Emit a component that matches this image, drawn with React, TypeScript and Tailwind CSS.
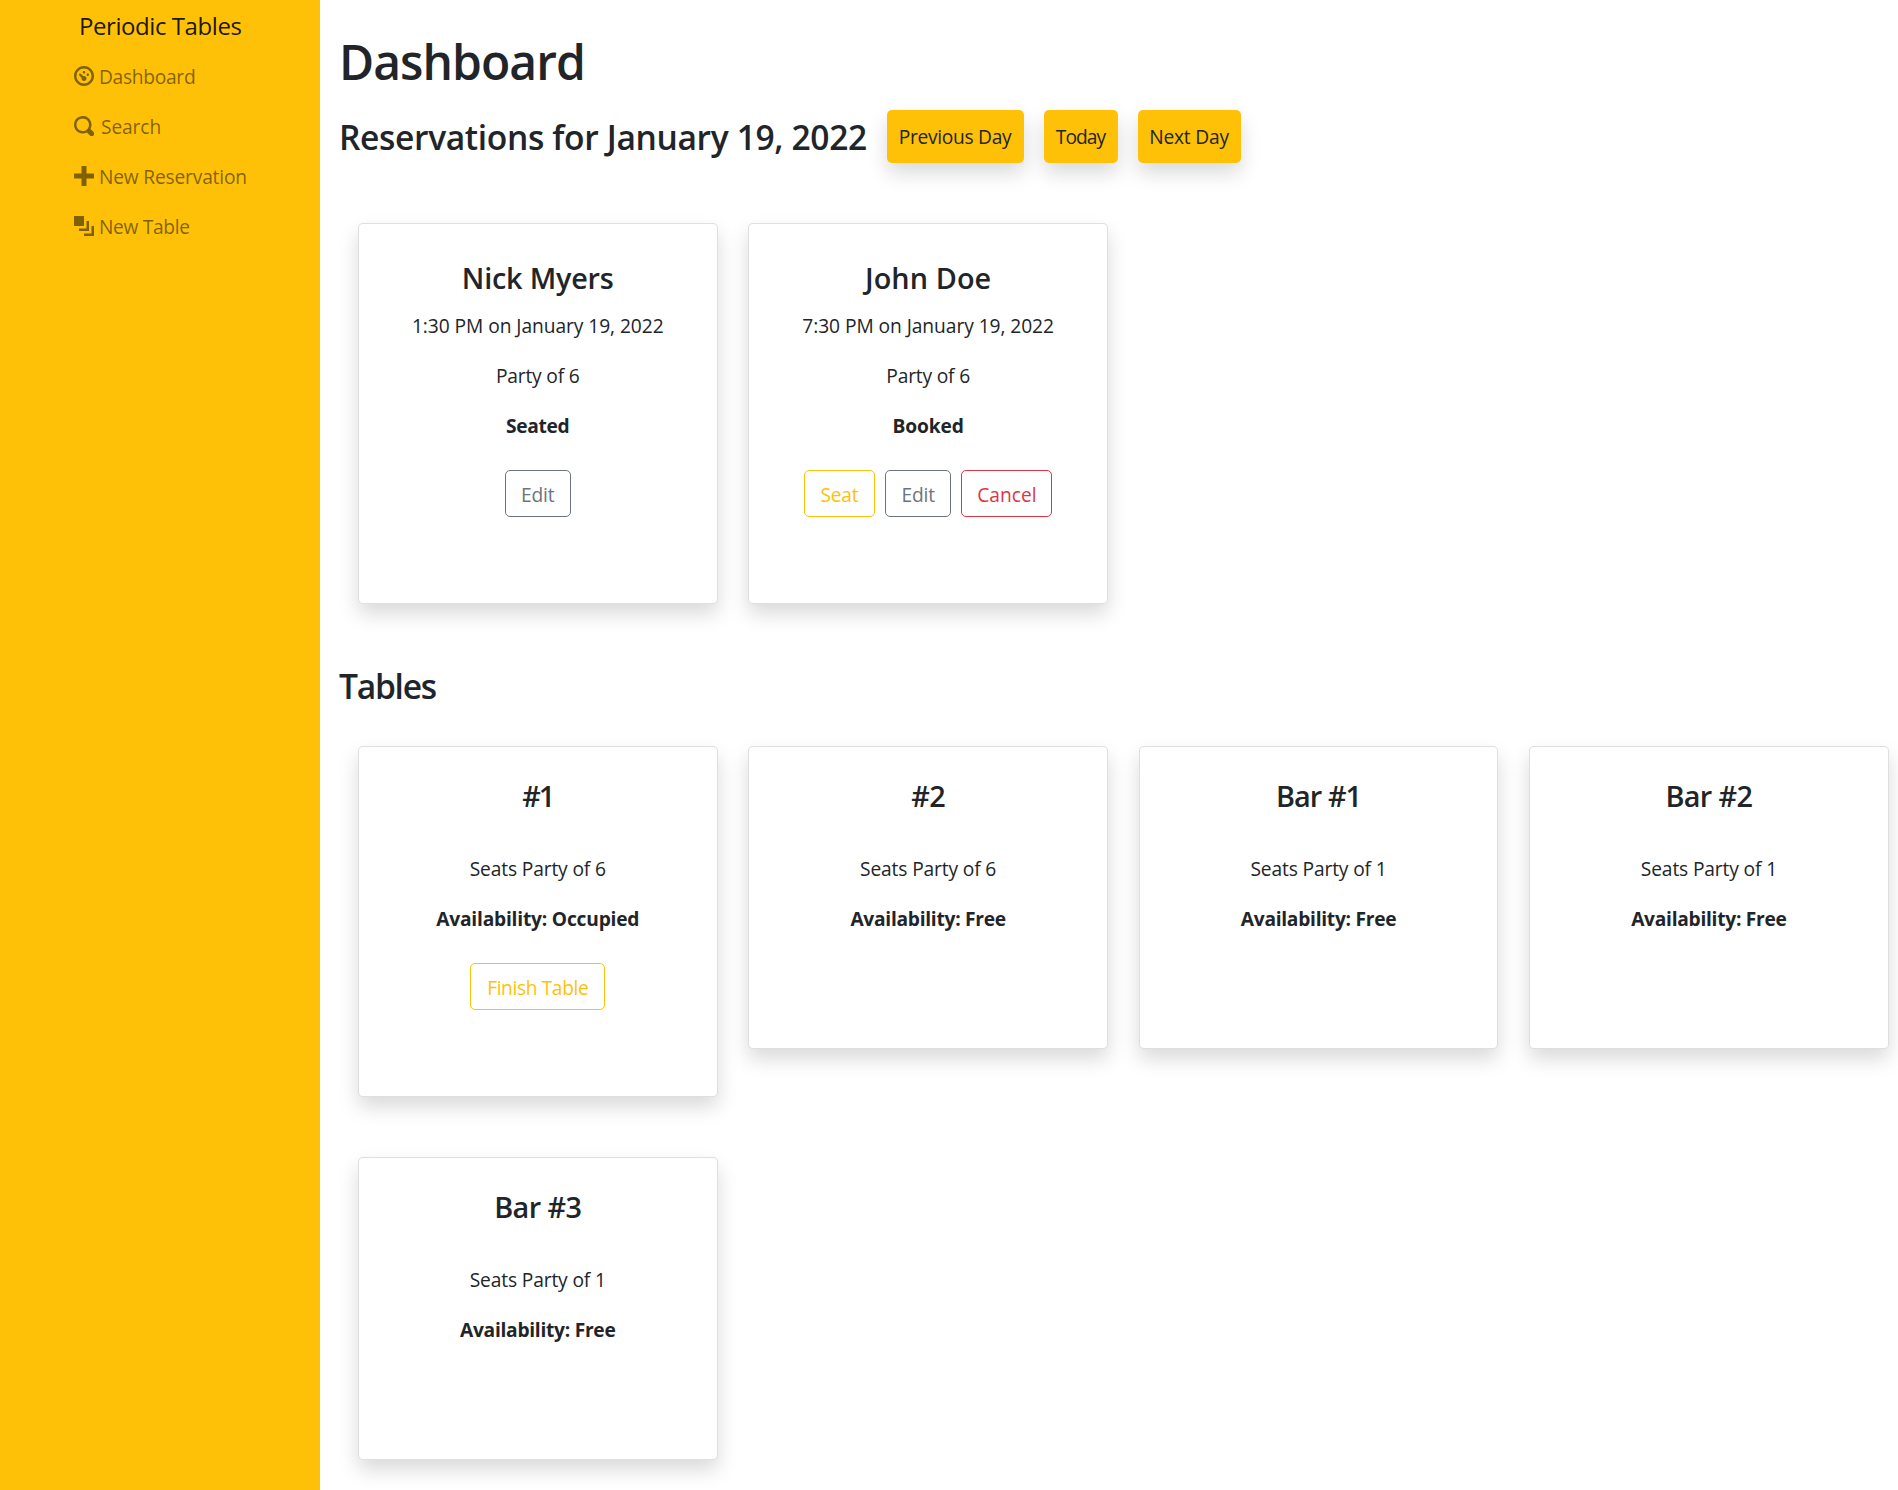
import type { ReactNode } from 'react';

const icons = {
  dashboard:
    'M4 0c-2.2 0-4 1.8-4 4s1.8 4 4 4 4-1.8 4-4-1.8-4-4-4zm0 1c1.66 0 3 1.34 3 3s-1.34 3-3 3-3-1.34-3-3 1.34-3 3-3zm0 1c-.28 0-.5.22-.5.5s.22.5.5.5.5-.22.5-.5-.22-.5-.5-.5zm-1.66 1a.5.5 0 0 0-.19.84l.91.91c-.02.08-.06.16-.06.25 0 .55.45 1 1 1s1-.45 1-1-.45-1-1-1c-.09 0-.17.04-.25.06l-.91-.91a.5.5 0 0 0-.44-.16.5.5 0 0 0-.06 0zm3.16 0c-.28 0-.5.22-.5.5s.22.5.5.5.5-.22.5-.5-.22-.5-.5-.5z',
  search:
    'M3.5 0c-1.93 0-3.5 1.57-3.5 3.5s1.57 3.5 3.5 3.5c.59 0 1.17-.14 1.66-.41a1 1 0 0 0 .13.13l1 1a1.02 1.02 0 1 0 1.44-1.44l-1-1a1 1 0 0 0-.16-.13c.27-.49.44-1.06.44-1.66 0-1.93-1.55-3.5-3.5-3.5zm0 1c1.39 0 2.5 1.11 2.5 2.5 0 .66-.24 1.27-.66 1.72-.01.01-.02.02-.03.03a1 1 0 0 0-.13.13c-.44.4-1.04.63-1.69.63-1.39 0-2.5-1.11-2.5-2.5s1.11-2.5 2.5-2.5z',
  plus: 'M3 0v3h-3v2h3v3h2v-3h3v-2h-3v-3h-2z',
  layers: 'M0 0v4h4v-4h-4zm5 2v3h-3v1h4v-4h-1zm2 2v3h-3v1h4v-4h-1z',
};

const navItems = [
  { label: 'Dashboard', icon: icons.dashboard, text: 'ml-[5.5px] tracking-[-0.3px]' },
  { label: 'Search', icon: icons.search, text: 'ml-[7.5px] tracking-[-0.12px]' },
  { label: 'New Reservation', icon: icons.plus, text: 'ml-[5.5px] tracking-[-0.19px]' },
  { label: 'New Table', icon: icons.layers, text: 'ml-[5.5px] tracking-[-0.34px]' },
];

const dayButtons = [
  { label: 'Previous Day', box: 'w-[137px] tracking-[-0.3px]' },
  { label: 'Today', box: 'w-[74px] tracking-[-0.95px]' },
  { label: 'Next Day', box: 'w-[103px] tracking-[-0.2px]' },
];

const seat = { label: 'Seat', style: 'w-[71px] border-[#ffc107] text-[#ffc107] tracking-[-0.25px]' };
const edit = { label: 'Edit', style: 'w-[66.5px] border-[#6c757d] text-[#6c757d] tracking-[-0.17px]' };
const cancel = { label: 'Cancel', style: 'w-[91px] border-[#dc3545] text-[#dc3545]' };
const finish = { label: 'Finish Table', style: 'w-[135px] border-[#ffc107] text-[#ffc107] tracking-[-0.39px]' };

const reservations = [
  { name: 'Nick Myers', title: 'tracking-[-0.2px]', time: '1:30 PM', status: 'Seated', statusStyle: 'tracking-[-0.34px]', actions: [edit] },
  { name: 'John Doe', title: 'tracking-[0.1px]', time: '7:30 PM', status: 'Booked', statusStyle: 'tracking-[-0.1px]', actions: [seat, edit, cancel] },
];

const tables = [
  { name: '#1', title: 'tracking-[-2px]', seats: 6, occupied: true },
  { name: '#2', title: 'tracking-[-0.6px]', seats: 6, occupied: false },
  { name: 'Bar #1', title: 'tracking-[-0.9px]', seats: 1, occupied: false },
  { name: 'Bar #2', title: 'tracking-[-0.6px]', seats: 1, occupied: false },
  { name: 'Bar #3', title: 'tracking-[-0.6px]', seats: 1, occupied: false },
];

function Card({ className, children }: { className: string; children: ReactNode }) {
  return (
    <div
      className={`flex flex-col items-center rounded-[5px] border border-black/[0.125] bg-white text-center shadow-[0_10px_20px_rgba(0,0,0,0.15)] ${className}`}
    >
      {children}
    </div>
  );
}

function Actions({ items }: { items: { label: string; style: string }[] }) {
  return (
    <div className="mt-[29px] flex gap-2.5">
      {items.map((a) => (
        <button key={a.label} className={`h-[47px] rounded-[5px] border pt-[9px] pb-[6px] leading-[30px] ${a.style}`}>
          {a.label}
        </button>
      ))}
    </div>
  );
}

export default function App() {
  return (
    <div className="flex h-[1490px] overflow-hidden bg-white font-['Open_Sans','Noto_Sans',sans-serif] text-[19.2px] leading-[30px] text-[#212529]">
      <aside className="w-80 shrink-0 bg-[#ffc107]">
        <div className="pt-[7px] pl-[79px] text-[24px] leading-[38px] tracking-[-0.43px] text-black/90">Periodic Tables</div>
        <nav className="mt-[7px] pl-[73.5px]">
          {navItems.map((n) => (
            <a key={n.label} className="flex h-[50px] items-start pt-[10px] text-black/50">
              <svg viewBox="0 0 8 8" className="mt-1 size-5 shrink-0" fill="currentColor">
                <path d={n.icon} />
              </svg>
              <span className={n.text}>{n.label}</span>
            </a>
          ))}
        </nav>
      </aside>

      <main className="flex-1 pl-5">
        <h1 className="mt-[32px] -ml-px text-[48px] leading-[60px] font-semibold tracking-[-0.96px]">Dashboard</h1>
        <div className="mt-[18px] -ml-px flex h-[53px] gap-5">
          <h2 className="w-[528px] text-[33.6px] leading-[54px] font-semibold tracking-[-0.36px] whitespace-nowrap">
            Reservations for January 19, 2022
          </h2>
          {dayButtons.map((b) => (
            <button
              key={b.label}
              className={`rounded-[5px] bg-[#ffc107] pr-px leading-[30px] shadow-[0_10px_20px_rgba(0,0,0,0.15)] ${b.box}`}
            >
              {b.label}
            </button>
          ))}
        </div>

        <section className="mt-[60px] ml-[18px] grid grid-cols-[repeat(4,359.5px)] items-start gap-x-[30.9px]">
          {reservations.map((r) => (
            <Card key={r.name} className="h-[380.5px] pt-[36px]">
              <h4 className={`text-[28.8px] leading-[36px] font-semibold ${r.title}`}>{r.name}</h4>
              <p className="mt-[15px] tracking-[-0.06px]">{r.time} on January 19, 2022</p>
              <p className="mt-5 tracking-[-0.17px]">Party of 6</p>
              <p className={`mt-5 font-bold ${r.statusStyle}`}>{r.status}</p>
              <Actions items={r.actions} />
            </Card>
          ))}
        </section>

        <h2 className="mt-[60px] -ml-px text-[33.6px] leading-[44px] font-semibold tracking-[-1.25px]">Tables</h2>

        <section className="mt-[38px] ml-[18px] grid grid-cols-[repeat(4,359.5px)] items-start gap-x-[30.9px] gap-y-[60px]">
          {tables.map((t) => (
            <Card key={t.name} className={t.occupied ? 'h-[351px] pt-[31px]' : 'h-[303px] pt-[31px]'}>
              <h4 className={`text-[28.8px] leading-[36px] font-semibold ${t.title}`}>{t.name}</h4>
              <p className="mt-[40px] tracking-[-0.14px]">Seats Party of {t.seats}</p>
              <p className={t.occupied ? 'mt-5 font-bold tracking-[-0.2px]' : 'mt-5 font-bold tracking-[-0.27px]'}>
                Availability: {t.occupied ? 'Occupied' : 'Free'}
              </p>
              {t.occupied && <Actions items={[finish]} />}
            </Card>
          ))}
        </section>
      </main>
    </div>
  );
}
